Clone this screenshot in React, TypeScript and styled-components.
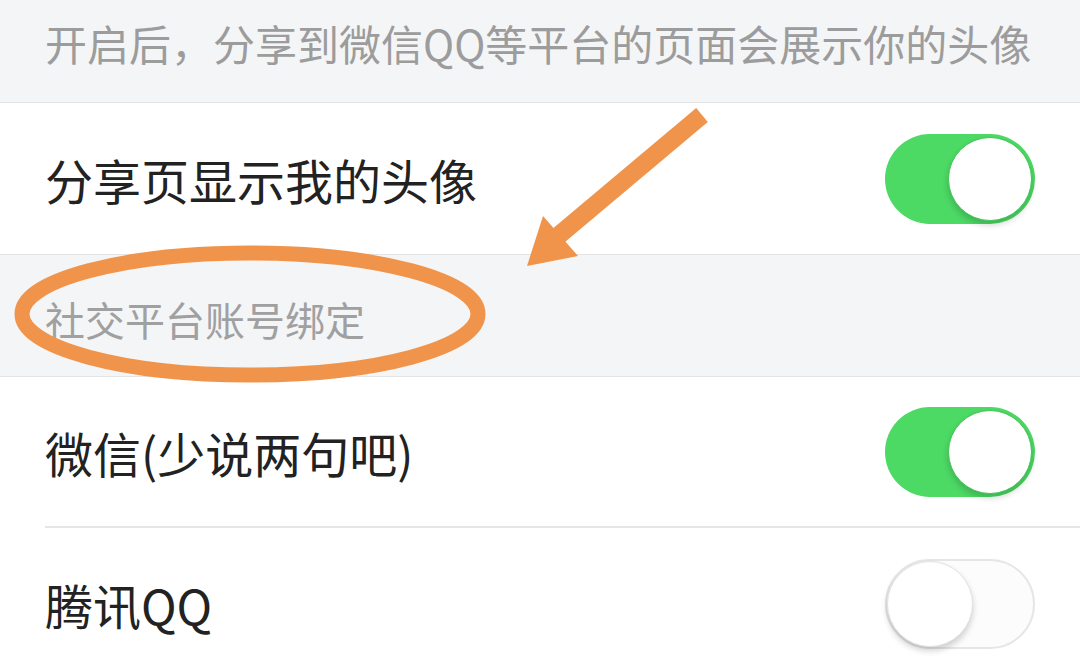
import React, { useState } from "react";
import styled, { createGlobalStyle } from "styled-components";

const GlobalStyle = createGlobalStyle`
  html, body {
    margin: 0;
    padding: 0;
    background: #ffffff;
  }
  body {
    font-family: "Noto Sans CJK SC", "Noto Sans", sans-serif;
    overflow: hidden;
  }
`;

const Page = styled.div`
  position: relative;
  width: 1080px;
  height: 661px;
  overflow: hidden;
  display: flex;
  flex-direction: column;
  & > * {
    flex-shrink: 0;
  }
`;

const Note = styled.div`
  height: 103px;
  padding: 0 45px 18px;
  box-sizing: border-box;
  background: #f4f5f7;
  border-bottom: 1px solid #e3e4e6;
  display: flex;
  align-items: center;
  font-size: 42px;
  color: #9c9c9c;
  white-space: nowrap;
`;

const GroupTitle = styled.div`
  height: 123px;
  padding: 6px 45px 0;
  box-sizing: border-box;
  background: #f4f5f7;
  border-top: 1px solid #e3e4e6;
  border-bottom: 1px solid #e3e4e6;
  display: flex;
  align-items: center;
  font-size: 40px;
  color: #a0a0a0;
`;

const Row = styled.div<{ $divided?: boolean }>`
  height: 151px;
  box-sizing: border-box;
  margin-left: 45px;
  padding-right: 45px;
  display: flex;
  align-items: center;
  justify-content: space-between;
  border-bottom: ${(p) => (p.$divided ? "2px solid #e6e6e6" : "none")};
  background: #ffffff;
`;

const Label = styled.span`
  font-size: 48px;
  color: #222222;
`;

const Track = styled.button<{ $on: boolean }>`
  position: relative;
  width: 150px;
  height: 90px;
  padding: 0;
  border-radius: 45px;
  box-sizing: border-box;
  cursor: pointer;
  border: ${(p) => (p.$on ? "none" : "2px solid #e6e6e6")};
  background: ${(p) => (p.$on ? "#4cd964" : "#fcfcfc")};
`;

const Knob = styled.span<{ $on: boolean }>`
  position: absolute;
  top: ${(p) => (p.$on ? "3px" : "0px")};
  left: ${(p) => (p.$on ? "63px" : "0px")};
  width: ${(p) => (p.$on ? "84px" : "86px")};
  height: ${(p) => (p.$on ? "84px" : "86px")};
  border-radius: 50%;
  background: #ffffff;
  box-sizing: border-box;
  border: 1px solid ${(p) => (p.$on ? "#45c55b" : "#e2e2e2")};
  box-shadow: 0 4px 6px rgba(0, 0, 0, 0.18);
`;

const Overlay = styled.svg`
  position: absolute;
  left: 0;
  top: 0;
  pointer-events: none;
`;

const Switch: React.FC<{ initial: boolean }> = ({ initial }) => {
  const [on, setOn] = useState(initial);
  return (
    <Track $on={on} onClick={() => setOn(!on)} aria-pressed={on}>
      <Knob $on={on} />
    </Track>
  );
};

const App: React.FC = () => {
  return (
    <Page>
      <GlobalStyle />
      <Note>开启后，分享到微信QQ等平台的页面会展示你的头像</Note>
      <Row>
        <Label>分享页显示我的头像</Label>
        <Switch initial={true} />
      </Row>
      <GroupTitle>社交平台账号绑定</GroupTitle>
      <Row $divided>
        <Label>微信(少说两句吧)</Label>
        <Switch initial={true} />
      </Row>
      <Row>
        <Label>腾讯QQ</Label>
        <Switch initial={false} />
      </Row>

      {/* annotation drawn on top of the screenshot */}
      <Overlay width="1080" height="661" viewBox="0 0 1080 661">
        <ellipse
          cx="250"
          cy="314"
          rx="228"
          ry="61"
          fill="none"
          stroke="#f0944b"
          strokeWidth="15"
        />
        <line x1="702" y1="115" x2="558" y2="236" stroke="#f0944b" strokeWidth="18" />
        <polygon points="527,266 543,216 578,256" fill="#f0944b" />
      </Overlay>
    </Page>
  );
};

export default App;
